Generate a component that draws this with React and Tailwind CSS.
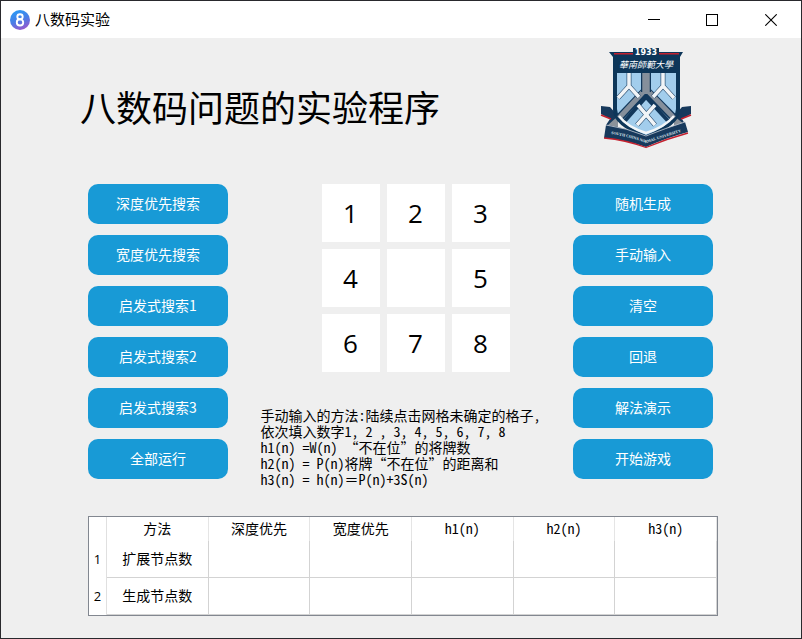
const SEARCHES = ['深度优先搜索', '宽度优先搜索', '启发式搜索1', '启发式搜索2', '启发式搜索3', '全部运行'];
const ACTIONS = ['随机生成', '手动输入', '清空', '回退', '解法演示', '开始游戏'];
const TILES = ['1', '2', '3', '4', '', '5', '6', '7', '8'];
const COLUMNS = ['方法', '深度优先', '宽度优先', 'h1(n)', 'h2(n)', 'h3(n)'];
const ROWS = ['扩展节点数', '生成节点数'];

function AppIcon() {
  return (
    <svg viewBox="0 0 20 20" className="h-5 w-5" aria-hidden="true">
      <defs>
        <linearGradient id="app-icon" x1="0.3" y1="0" x2="0.7" y2="1">
          <stop offset="0" stopColor="#2a9af5" />
          <stop offset="0.5" stopColor="#4a7de6" />
          <stop offset="1" stopColor="#9d55cc" />
        </linearGradient>
      </defs>
      <circle cx="10" cy="10" r="10" fill="url(#app-icon)" />
      <ellipse cx="10" cy="6.8" rx="2.7" ry="2.5" fill="none" stroke="#fff" strokeWidth="1.9" />
      <ellipse cx="10" cy="12.4" rx="3.2" ry="3.1" fill="none" stroke="#fff" strokeWidth="1.9" />
    </svg>
  );
}

function Crest() {
  return (
    <svg viewBox="10 6 92 104" className="h-[104px] w-[92px]" role="img" aria-label="South China Normal University">
      <defs>
        <path id="motto" d="M15 93 Q37 96 56 103 Q75 97 97 90" />
      </defs>
      {/* ribbon tails */}
      <path d="M11 66 L20 67 L28 76 V87 L16 85 L20 79 L11 74 Z" fill="#17395c" />
      <path d="M101 66 L92 67 L84 76 V87 L95 84 L92 79 L101 74 Z" fill="#17395c" />
      <path d="M11 75 L21 79 M101 75 L91 79" stroke="#c3202e" strokeWidth="1.6" fill="none" />
      <path d="M28 76 V87 L18 85 Z M84 76 V87 L94 84 Z" fill="#8b929a" />
      {/* shield */}
      <path d="M19 12 H93 L90 17 V70 Q90 86 56 98 Q23 86 23 70 V17 Z" fill="#0d3659" />
      <path d="M24 13.8 H89" stroke="#c3202e" strokeWidth="1.5" />
      <path d="M27 33 H86 V69 Q85 84 56 95 Q28 84 27 69 Z" fill="#a2cdec" />
      {/* chevrons */}
      <path d="M33 83 L56 57 L80 83" fill="none" stroke="#12385c" strokeWidth="4" />
      <path d="M29 78 L56 50 L84 78" fill="none" stroke="#12385c" strokeWidth="8" />
      <path d="M29 78 L56 49 L84 78" fill="none" stroke="#858f9b" strokeWidth="5" />
      <path d="M56 33 V52" stroke="#12385c" strokeWidth="10" />
      <path d="M56 33 V54" stroke="#858f9b" strokeWidth="7.5" />
      <g fill="none" stroke="#173c60" strokeWidth="4.8">
        <path d="M39 33 V46 L28 58 M39 46 L49 57" />
        <path d="M73 33 V46 L63 57 M73 46 L84 58" />
        <path d="M48 65 L65 85 M65 65 L47 85" />
      </g>
      <g fill="none" stroke="#f1f4f7" strokeWidth="3.6">
        <path d="M39 33 V46 L28 58 M39 46 L49 57" />
        <path d="M73 33 V46 L63 57 M73 46 L84 58" />
        <path d="M48 65 L65 85 M65 65 L47 85" />
      </g>
      <path d="M29 76 Q37 87 56 93 Q75 87 84 76" fill="none" stroke="#f3f6f8" strokeWidth="2.4" />
      {/* year and name */}
      <rect x="43" y="8" width="26" height="9" fill="#0d3659" />
      <text x="56" y="15" textAnchor="middle" fill="#fff" className="font-['DejaVu_Sans'] text-[8px] font-bold">1933</text>
      <text x="56" y="28" textAnchor="middle" fill="#fff" className="font-['Noto_Sans_CJK_TC',sans-serif] text-[9px] italic">華南師範大學</text>
      {/* banner */}
      <path d="M16 85 Q37 88 56 96 Q76 88 95 82 L98 92 Q76 98 56 107 Q36 100 14 98 Z" fill="#17395c" />
      <path d="M14 98 Q36 100 56 107.5 Q76 99 98 93" fill="none" stroke="#c3202e" strokeWidth="1.3" />
      <path d="M16 85 Q37 88 56 96 Q76 88 95 82" fill="none" stroke="#c5ccd5" strokeWidth="0.8" />
      <text fill="#dfe6ec" textAnchor="middle" className="font-['Liberation_Serif'] text-[4px] font-bold">
        <textPath href="#motto" startOffset="50%">SOUTH CHINA NORMAL UNIVERSITY</textPath>
      </text>
    </svg>
  );
}

function TitleBar() {
  return (
    <div className="flex h-[37px] items-center bg-white pl-[9px]">
      <AppIcon />
      <span className="ml-[5px] flex-1 text-[15px]">八数码实验</span>
      <button type="button" aria-label="最小化" className="flex h-full w-[58px] items-center justify-center">
        <svg viewBox="0 0 12 12" className="h-3 w-3" stroke="#000" shapeRendering="crispEdges"><path d="M0 5.5H12" /></svg>
      </button>
      <button type="button" aria-label="最大化" className="flex h-full w-[58px] items-center justify-center">
        <svg viewBox="0 0 12 12" className="h-3 w-3" fill="none" stroke="#000" shapeRendering="crispEdges"><path d="M.5 .5H11.5V11.5H.5Z" /></svg>
      </button>
      <button type="button" aria-label="关闭" className="flex h-full w-[60px] items-center justify-center">
        <svg viewBox="0 0 12 12" className="h-3 w-3" stroke="#000" strokeWidth="1.1"><path d="M.3 .3L11.7 11.7M11.7 .3L.3 11.7" /></svg>
      </button>
    </div>
  );
}

function ButtonColumn({ labels }) {
  return (
    <div className="flex w-[140px] flex-col gap-[11px]">
      {labels.map((label) => (
        <button key={label} type="button" className="h-10 rounded-[10px] bg-[#189ad6] pb-0.5 font-['Noto_Sans_CJK_SC',sans-serif] text-sm text-white">
          {label}
        </button>
      ))}
    </div>
  );
}

function ResultTable() {
  return (
    <table className="w-full table-fixed border-separate border-spacing-0 border border-[#828790] bg-white text-center text-sm">
      <colgroup>
        <col className="w-[18px]" />
        {COLUMNS.map((c) => <col key={c} />)}
      </colgroup>
      <thead>
        <tr className="h-6">
          <td className="border-r border-[#e0e0e0] p-0" />
          {COLUMNS.map((c) => (
            <th key={c} scope="col" className="border-r border-[#e5e5e5] p-0 pb-0.5 font-normal">{c}</th>
          ))}
        </tr>
      </thead>
      <tbody>
        {ROWS.map((name, i) => (
          <tr key={name} className="h-[37px]">
            <th scope="row" className="border-r border-[#e0e0e0] p-0 font-['Open_Sans',sans-serif] text-[13px] font-normal">{i + 1}</th>
            <td className="border-r border-b border-[#d3d3d3] p-0 pb-0.5">{name}</td>
            {COLUMNS.slice(1).map((c) => (
              <td key={c} className="border-r border-b border-[#d3d3d3] p-0" />
            ))}
          </tr>
        ))}
      </tbody>
    </table>
  );
}

export default function App() {
  return (
    <div className="flex min-h-screen flex-col border border-[#29292d] bg-[#efefef] font-['Noto_Sans_Mono_CJK_SC','Noto_Sans_CJK_SC',sans-serif] text-black">
      <TitleBar />
      <main className="pr-[83px] pb-[22px] pl-[87px]">
        <header className="-ml-2 flex h-[146px] items-start justify-between pt-2 pr-[26px]">
          <h1 className="pt-10 text-4xl">八数码问题的实验程序</h1>
          <Crest />
        </header>
        <div className="flex justify-between pr-[5px]">
          <ButtonColumn labels={SEARCHES} />
          <section className="w-[280px]">
            <div className="ml-[61px] grid w-[188px] grid-cols-3 gap-[7px]">
              {TILES.map((n, i) => (
                <button key={i} type="button" aria-label={n || '空格'} className="h-[58px] bg-white font-['Open_Sans',sans-serif] text-[26px]">
                  {n}
                </button>
              ))}
            </div>
            <p className="mt-[35px] text-sm leading-4 whitespace-pre">
              手动输入的方法:陆续点击网格未确定的格子,<br />
              依次填入数字1, 2 , 3, 4, 5, 6, 7, 8<br />
              h1(n) =W(n) “不在位”的将牌数<br />
              h2(n) = P(n)将牌“不在位”的距离和<br />
              h3(n) = h(n)＝P(n)+3S(n)
            </p>
          </section>
          <ButtonColumn labels={ACTIONS} />
        </div>
        <div className="mt-[29px]">
          <ResultTable />
        </div>
      </main>
    </div>
  );
}
